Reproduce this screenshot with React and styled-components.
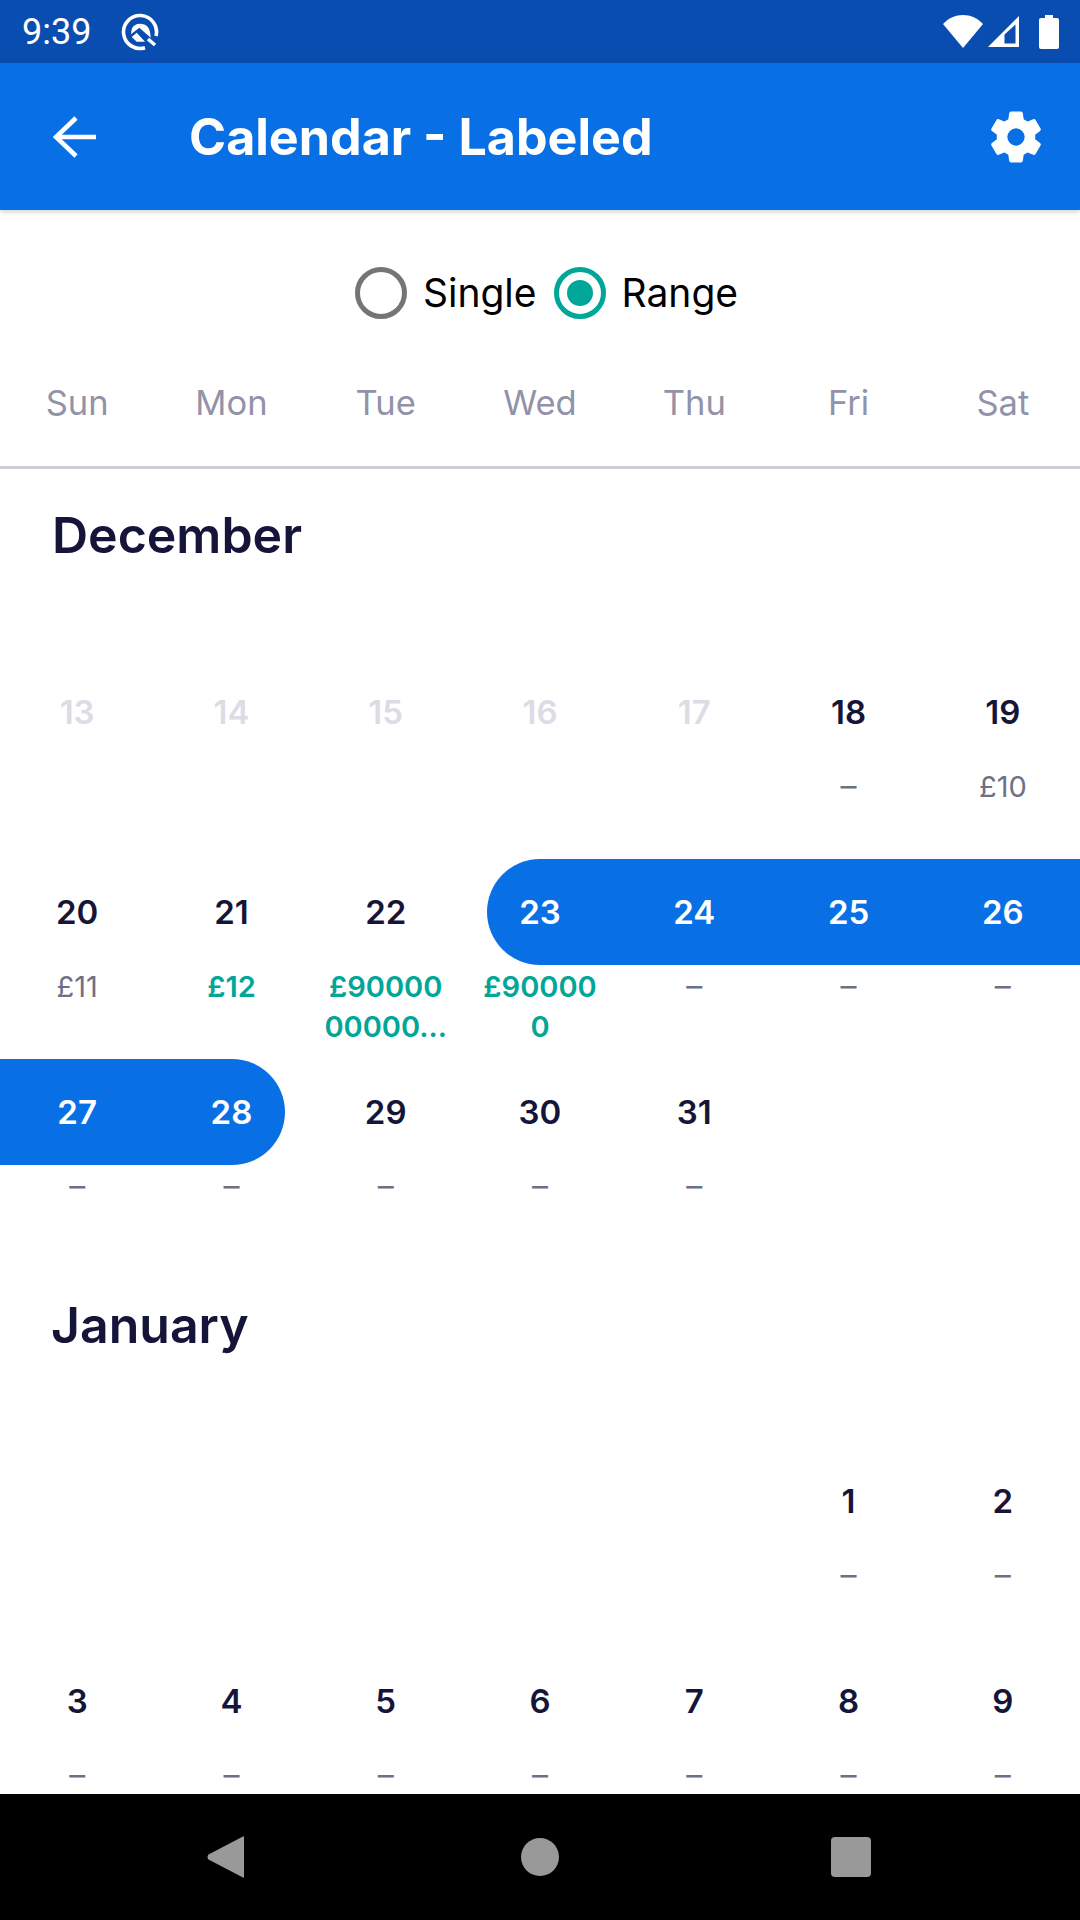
import React from 'react';
import styled, { createGlobalStyle } from 'styled-components';

const Global = createGlobalStyle`
  html, body { margin: 0; padding: 0; background: #fff; }
  #root { width: 1080px; height: 1920px; }
`;
const FONT = `Inter, "Liberation Sans", sans-serif`;

const Screen = styled.div`
  width: 1080px; height: 1920px; display: flex; flex-direction: column;
  overflow: hidden; background: #fff; font-family: ${FONT};
`;
const StatusBar = styled.div`
  height: 63px; flex: none; background: #0a4db0; color: #fff;
  display: flex; align-items: center; padding: 0 21px 0 22px; box-sizing: border-box;
`;
const Clock = styled.span`
  font: 400 36px/1 Roboto, sans-serif; color: #fff; margin-right: 30px;
`;
const StatusIcons = styled.div`
  margin-left: auto; display: flex; align-items: center; gap: 4px;
`;
const BatterySlot = styled.span`
  display: flex; margin-left: 15px;
`;
const AppBar = styled.div`
  height: 147px; flex: none; background: #0870e4; color: #fff;
  display: flex; align-items: center; padding: 0 33px 0 53px; box-sizing: border-box;
  box-shadow: 0 2px 5px rgba(0,0,0,.18); position: relative; z-index: 1;
`;
const Title = styled.h1`
  margin: 2px 0 0 93px; font: 700 50.2px/1 ${FONT}; color: #fff; flex: 1;
`;
const RadioRow = styled.div`
  height: 141px; flex: none; display: flex; align-items: center; justify-content: center;
  padding: 24px 0 0 13px; box-sizing: border-box; gap: 17px;
`;
const RadioItem = styled.label`
  display: flex; align-items: center; gap: 16px; font: 400 39px/1 ${FONT}; color: #000;
`;
const RadioCircle = styled.span`
  width: 52px; height: 52px; border-radius: 50%; box-sizing: border-box;
  border: 5px solid ${p => (p.$on ? '#00a698' : '#757575')};
  display: flex; align-items: center; justify-content: center;
  &::after {
    content: ''; width: 26px; height: 26px; border-radius: 50%;
    background: ${p => (p.$on ? '#00a698' : 'transparent')};
  }
`;
const WeekHeader = styled.div`
  height: 118px; flex: none; display: grid; grid-template-columns: repeat(7, 1fr);
  border-bottom: 3px solid #cdcddb; box-sizing: border-box; padding-top: 28px;
`;
const WeekDay = styled.div`
  text-align: center; font: 400 34.5px/48px ${FONT}; color: #9292a8;
`;
const Scroll = styled.div`
  flex: 1; min-height: 0; overflow: hidden;
`;
const MonthTitle = styled.h2`
  margin: 0; padding-left: ${p => p.$pad}px; font: 600 50px/60px ${FONT}; color: #15153a;
`;
const MonthHead = styled.div`
  height: ${p => p.$h}px; padding-top: ${p => p.$top}px; box-sizing: border-box;
`;
const Grid = styled.div`
  display: grid; grid-template-columns: repeat(7, 1fr); grid-auto-rows: 200px;
`;
const Cell = styled.div`
  display: flex; flex-direction: column; align-items: stretch; min-width: 0;
`;
const Pill = styled.div`
  height: 106px; display: flex; align-items: center; justify-content: center;
  font: 600 33px/1 ${FONT};
  color: ${p => (p.$sel ? '#fff' : p.$off ? '#dcdce6' : '#15153a')};
  background: ${p => (p.$sel ? '#0870e4' : 'transparent')};
  margin-left: ${p => (p.$start ? 24 : 0)}px;
  padding-right: ${p => (p.$start ? 24 : 0)}px;
  margin-right: ${p => (p.$end ? 24 : 0)}px;
  padding-left: ${p => (p.$end ? 24 : 0)}px;
  border-radius: ${p => (p.$start ? '53px 0 0 53px' : p.$end ? '0 53px 53px 0' : '0')};
`;
const Label = styled.div`
  text-align: center; margin-top: ${p => (p.$dash ? 1 : 2)}px; white-space: pre-line;
  font-weight: ${p => (p.$deal ? 600 : 400)};
  font-size: ${p => (p.$dash ? 32 : 29)}px;
  line-height: 40px;
  color: ${p => (p.$deal ? '#00a698' : '#6f6f85')};
`;
const NavBar = styled.div`
  height: 126px; flex: none; background: #000;
  display: grid; grid-template-columns: 314px 310px 40px; align-items: center;
  padding-left: 207px; box-sizing: border-box;
`;

const Q = () => (
  <svg width="38" height="38" viewBox="0 0 38 38" fill="none">
    <path d="M24 34.7 A16.5 16.5 0 1 1 35 23" stroke="#fff" strokeWidth="3.6" />
    <path d="M27 26 L34 32" stroke="#fff" strokeWidth="3.6" />
    <path d="M10.7 16.3 C12 12.5 15 10.7 19 10.7 C25 10.7 29.5 14 29.7 24.7 L18.3 14.7 L10 21.3Z" fill="#fff" />
    <path d="M10.7 24 L15.7 19.7 L24 28.7 L15.7 28.7Z" fill="#fff" />
  </svg>
);
const Wifi = () => (
  <svg width="40" height="33" viewBox="0 0 40 33"><path d="M0 9 C11 -3 29 -3 40 9 L20 33Z" fill="#fff" /></svg>
);
const Signal = () => (
  <svg width="33" height="33" viewBox="0 0 33 33" fill="none">
    <path d="M1 32 L32 1 V32Z" fill="#fff" />
    <path d="M17.5 28.5 V19.5 L28.5 9.5 V28.5Z" fill="#0a4db0" />
  </svg>
);
const Battery = () => (
  <svg width="20" height="34" viewBox="0 0 20 34"><path d="M6 0h8v3h4a2 2 0 0 1 2 2v27a2 2 0 0 1-2 2H2a2 2 0 0 1-2-2V5a2 2 0 0 1 2-2h4z" fill="#fff" /></svg>
);
const Back = () => (
  <svg width="43" height="42" viewBox="0 0 43 42" fill="none" stroke="#fff" strokeWidth="4.6">
    <path d="M43 21 H3" /><path d="M23 2 L3 21 L23 40" />
  </svg>
);
const Gear = () => (
  <svg width="62" height="62" viewBox="0 0 24 24" fill="#fff" stroke="#fff" strokeWidth="0.5" strokeLinejoin="round">
    <path d="M19.14 12.94c.04-.3.06-.61.06-.94s-.02-.64-.07-.94l2.03-1.58a.49.49 0 0 0 .12-.61l-1.92-3.32a.49.49 0 0 0-.59-.22l-2.39.96c-.5-.38-1.03-.7-1.62-.94l-.36-2.54a.48.48 0 0 0-.48-.41h-3.84a.47.47 0 0 0-.47.41l-.36 2.54c-.59.24-1.13.57-1.62.94l-2.39-.96a.48.48 0 0 0-.59.22L2.74 8.87a.47.47 0 0 0 .12.61l2.03 1.58c-.05.3-.09.63-.09.94s.02.64.07.94l-2.03 1.58a.49.49 0 0 0-.12.61l1.92 3.32c.12.22.37.29.59.22l2.39-.96c.5.38 1.03.7 1.62.94l.36 2.54c.05.24.24.41.48.41h3.84c.24 0 .44-.17.47-.41l.36-2.54c.59-.24 1.13-.56 1.62-.94l2.39.96c.22.08.47 0 .59-.22l1.92-3.32a.47.47 0 0 0-.12-.61zM12 15.6A3.6 3.6 0 1 1 12 8.4a3.6 3.6 0 0 1 0 7.2z" />
  </svg>
);
const NavBack = () => (
  <svg width="38" height="42" viewBox="0 0 38 42"><path d="M37 1 V41 Q36.5 42.5 35 41 L1.5 23.5 Q-0.5 21 1.5 18.5 L35 1 Q36.5 -0.5 37 1Z" fill="#999" /></svg>
);
const NavHome = () => (
  <svg width="38" height="38" viewBox="0 0 38 38"><circle cx="19" cy="19" r="19" fill="#999" /></svg>
);
const NavRecent = () => (
  <svg width="40" height="40" viewBox="0 0 40 40"><rect width="40" height="40" rx="4" fill="#999" /></svg>
);

const D = '–';
const december = [
  { n: 13, off: 1 }, { n: 14, off: 1 }, { n: 15, off: 1 }, { n: 16, off: 1 }, { n: 17, off: 1 },
  { n: 18, l: D }, { n: 19, l: '£10' },
  { n: 20, l: '£11' }, { n: 21, l: '£12', deal: 1 }, { n: 22, l: '£90000\n00000...', deal: 1 },
  { n: 23, l: '£90000\n0', deal: 1, sel: 1, start: 1 }, { n: 24, l: D, sel: 1 }, { n: 25, l: D, sel: 1 }, { n: 26, l: D, sel: 1 },
  { n: 27, l: D, sel: 1 }, { n: 28, l: D, sel: 1, end: 1 }, { n: 29, l: D }, { n: 30, l: D }, { n: 31, l: D },
];
const january = [
  {}, {}, {}, {}, {}, { n: 1, l: D }, { n: 2, l: D },
  ...[3, 4, 5, 6, 7, 8, 9].map(n => ({ n, l: D })),
];

const Days = ({ items }) => (
  <Grid>
    {items.map((d, i) => (
      <Cell key={i}>
        {d.n && (
          <Pill $sel={d.sel} $off={d.off} $start={d.start} $end={d.end}>{d.n}</Pill>
        )}
        {d.l && <Label $deal={d.deal} $dash={d.l === D}>{d.l}</Label>}
      </Cell>
    ))}
  </Grid>
);

export default function App() {
  return (
    <Screen>
      <Global />
      <StatusBar>
        <Clock>9:39</Clock>
        <Q />
        <StatusIcons>
          <Wifi /><Signal /><BatterySlot><Battery /></BatterySlot>
        </StatusIcons>
      </StatusBar>
      <AppBar>
        <Back />
        <Title>Calendar - Labeled</Title>
        <Gear />
      </AppBar>
      <RadioRow>
        <RadioItem><RadioCircle />Single</RadioItem>
        <RadioItem><RadioCircle $on />Range</RadioItem>
      </RadioRow>
      <WeekHeader>
        {['Sun', 'Mon', 'Tue', 'Wed', 'Thu', 'Fri', 'Sat'].map(d => <WeekDay key={d}>{d}</WeekDay>)}
      </WeekHeader>
      <Scroll>
        <MonthHead $h={190} $top={36}><MonthTitle $pad={52}>December</MonthTitle></MonthHead>
        <Days items={december} />
        <MonthHead $h={189} $top={36}><MonthTitle $pad={51}>January</MonthTitle></MonthHead>
        <Days items={january} />
      </Scroll>
      <NavBar>
        <NavBack /><NavHome /><NavRecent />
      </NavBar>
    </Screen>
  );
}
